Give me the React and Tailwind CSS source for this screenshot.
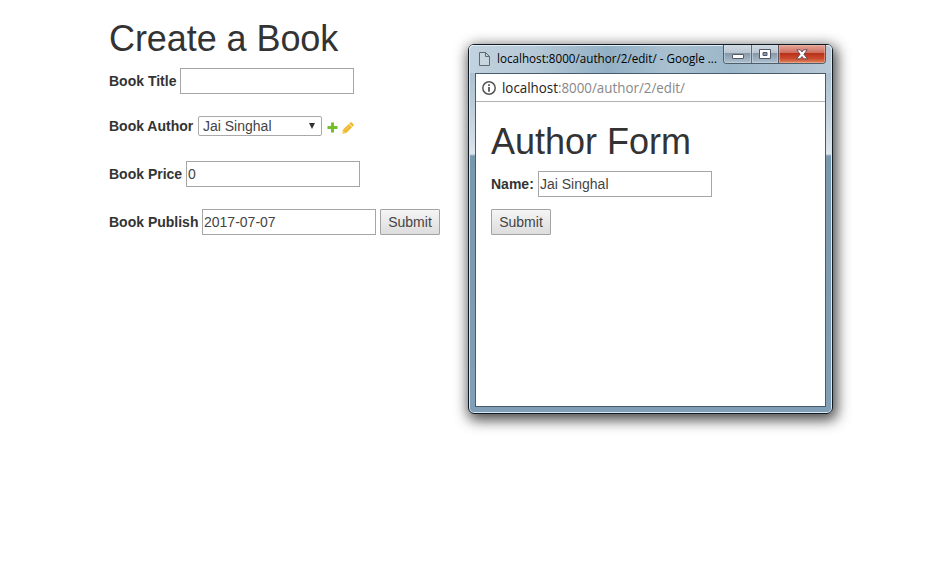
import React from "react";

const inputClass =
  "block h-[26px] w-[174px] rounded-none border border-[#a6a6a6] bg-white px-px text-[14px] leading-5 text-[#444] outline-none";

function Field({ label, labelWidth, value, children }) {
  return (
    <div className="flex h-[26px] items-center">
      <label className={`${labelWidth} shrink-0 whitespace-nowrap text-[14px] leading-5 font-bold`}>{label}</label>
      <input className={inputClass} defaultValue={value} aria-label={label} />
      {children}
    </div>
  );
}

function SubmitButton({ className = "" }) {
  return (
    <button
      className={`h-[26px] w-[60px] shrink-0 rounded-[1px] border border-[#a3a3a3] bg-linear-to-b from-[#f5f5f5] to-[#dddddd] text-center text-[14px] leading-5 text-[#444] ${className}`}
    >
      Submit
    </button>
  );
}

function PlusIcon() {
  return (
    <svg className="ml-[5px] mt-[3px] h-[11px] w-[11px] shrink-0" viewBox="0 0 11 11">
      <path d="M4 .5h3V4h3.5v3H7v3.5H4V7H.5V4H4z" fill="#70bf2b" />
    </svg>
  );
}

function PencilIcon() {
  return (
    <svg className="ml-[4px] mt-[3px] h-[12px] w-[12px] shrink-0" viewBox="0 0 12 12">
      <path d="M.3 11.7 1 7.8 6.8 2l3.2 3.2L4.2 11z" fill="#efb82b" />
      <path d="m7.3 1.5.9-.9q.8-.7 1.6 0l1.6 1.6q.7.8 0 1.6l-.9.9z" fill="#efb82b" />
      <path d="M2.9 8.4 7 4.3" stroke="#f9dc7a" strokeWidth=".8" />
      <path d="m1.5 9.2 1.4 1.4-1.5.3z" fill="#fff3c2" />
    </svg>
  );
}

function BookForm() {
  return (
    <section className="ml-[109px] w-[359px] shrink-0 pt-[19px]">
      <h1 className="h-[49px] whitespace-nowrap text-[36px] leading-[40px] tracking-[-0.07px]">Create a Book</h1>
      <Field label="Book Title" labelWidth="w-[71px]" value="" />
      <div className="mt-[22px] flex h-[20px] items-center">
        <label className="w-[89px] shrink-0 whitespace-nowrap text-[14px] leading-5 font-bold">Book Author</label>
        <button className="flex h-[20px] w-[124px] shrink-0 items-center justify-between rounded-[2px] border border-[#a9a9a9] bg-white pr-[6px] pl-[4px] text-[14px] leading-[18px] text-[#444]">
          <span>Jai Singhal</span>
          <svg className="h-[6px] w-[6px]" viewBox="0 0 6 6">
            <path d="M0 0h6L3 6z" fill="#333" />
          </svg>
        </button>
        <PlusIcon />
        <PencilIcon />
      </div>
      <div className="mt-[25px]">
        <Field label="Book Price" labelWidth="w-[77px]" value="0" />
      </div>
      <div className="mt-[22px]">
        <Field label="Book Publish" labelWidth="w-[93px]" value="2017-07-07">
          <SubmitButton className="ml-1" />
        </Field>
      </div>
    </section>
  );
}

function WindowControls() {
  return (
    <div className="flex h-[19px] w-[103px] shrink-0 overflow-hidden rounded-b-[4px] border border-t-0 border-[#4e5d6b]">
      <div className="flex w-[28px] items-center justify-center border-r border-[#5d6d7b] bg-[linear-gradient(#d0d9e1_0%,#b8c5d1_45%,#8799a9_46%,#afc1d0_100%)] shadow-[inset_0_0_0_1px_#d4dde680]">
        <svg className="mt-[5px] h-[6px] w-[12px]" viewBox="0 0 12 6">
          <rect x=".5" y=".5" width="11" height="4" rx=".5" fill="#fff" stroke="#515866" />
        </svg>
      </div>
      <div className="flex w-[27px] items-center justify-center border-r border-[#5d5058] bg-[linear-gradient(#d0d9e1_0%,#b8c5d1_45%,#8799a9_46%,#afc1d0_100%)] shadow-[inset_0_0_0_1px_#d4dde680]">
        <svg className="h-[10px] w-[12px]" viewBox="0 0 12 10">
          <path fillRule="evenodd" d="M.5.5h11v9H.5zM4 3.5v3h4v-3z" fill="#fff" stroke="#515866" />
        </svg>
      </div>
      <div className="flex flex-1 items-center justify-center bg-[linear-gradient(#e4a598_0%,#cd6c5c_45%,#b8311b_46%,#ca4a2c_75%,#de8860_100%)] shadow-[inset_0_0_0_1px_#f1bdaa80]">
        <svg className="h-[11px] w-[12px]" viewBox="0 0 12 11">
          <path
            d="M.8.8h3.5L6 3 7.7.8h3.5L7.9 5.3l3.6 4.5H7.8L6 7.5 4.2 9.8H.5l3.6-4.5z"
            fill="#fff"
            stroke="#5c4552"
            strokeWidth=".9"
          />
        </svg>
      </div>
    </div>
  );
}

function AuthorWindow() {
  return (
    <section className="mt-[44px] h-[370px] w-[365px] shrink-0 rounded-[6px] border border-[#101a24] bg-[linear-gradient(#9fb9cc_0px,#adc2d2_29px,#b9cbd8_55px,#dbe5ec_109px,#7898ad_111px,#819fb6_100%)] shadow-[inset_0_0_0_1px_#d8e8f2,2px_4px_14px_2px_#000000b8]">
      <div className="flex h-[28px] rounded-t-[5px] bg-[linear-gradient(90deg,#c2d2de_0%,#b6c9d7_18%,#92b0c5_38%,#a9c0d0_55%,#9cb7c9_72%,#b9c9d6_100%)] pl-[10px] shadow-[inset_0_1px_0_#e3edf5,inset_1px_0_0_#d8e8f2,inset_-1px_0_0_#d8e8f2]">
        <svg className="mt-[7px] h-[14px] w-[11px] shrink-0" viewBox="0 0 11 14">
          <path d="M.5.5h6l4 4v9H.5z" fill="#c8d6df" stroke="#606970" />
          <path d="M6.5.5v4h4" fill="none" stroke="#606970" />
        </svg>
        <svg className="ml-[7px] h-[28px] w-[226px] shrink-0" viewBox="0 0 226 28">
          <text
            x="0"
            y="18"
            textLength="220"
            lengthAdjust="spacingAndGlyphs"
            className="fill-black font-['Open_Sans','Noto_Sans',sans-serif] text-[12px]"
          >
            localhost:8000/author/2/edit/ - Google ...
          </text>
        </svg>
        <WindowControls />
      </div>
      <div className="mx-[6px] h-[334px] border border-[#465c6c] bg-white">
        <div className="flex h-[28px] items-center border-b border-[#b1b1b1] pl-[6px]">
          <svg className="h-[14px] w-[14px] shrink-0" viewBox="0 0 14 14">
            <circle cx="7" cy="7" r="6.2" fill="none" stroke="#555" strokeWidth="1.5" />
            <path d="M6.1 3.3h1.8v1.7H6.1zM6.1 6h1.8v4.7H6.1z" fill="#555" />
          </svg>
          <svg className="ml-[6px] h-[27px] w-[190px]" viewBox="0 0 190 27">
            <text
              x="0"
              y="19"
              textLength="183"
              lengthAdjust="spacingAndGlyphs"
              className="fill-[#888] font-['Open_Sans','Noto_Sans',sans-serif] text-[14px]"
            >
              <tspan className="fill-[#222]">localhost</tspan>:8000/author/2/edit/
            </text>
          </svg>
        </div>
        <div className="pt-[20px] pl-[15px]">
          <h1 className="h-[49px] whitespace-nowrap text-[36px] leading-[40px]">Author Form</h1>
          <Field label="Name:" labelWidth="w-[47px]" value="Jai Singhal" />
          <SubmitButton className="mt-[12px] block" />
        </div>
      </div>
    </section>
  );
}

export default function App() {
  return (
    <main className="flex h-[583px] w-[939px] items-start overflow-hidden bg-white font-['Liberation_Sans',Arial,sans-serif] text-[#333]">
      <BookForm />
      <AuthorWindow />
    </main>
  );
}
